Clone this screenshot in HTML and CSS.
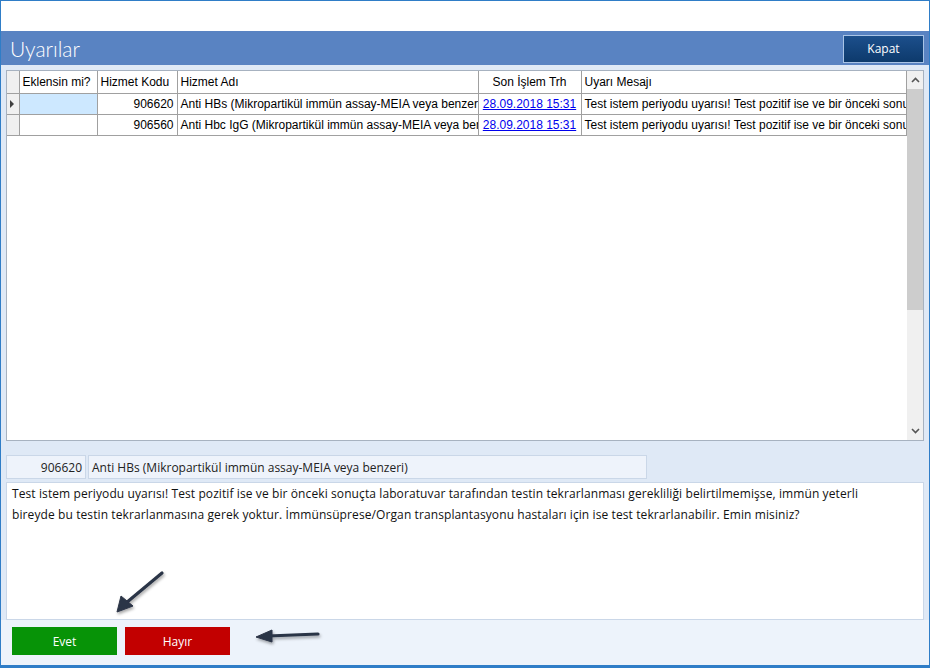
FILE: index.html
```html
<!DOCTYPE html>
<html lang="tr">
<head>
<meta charset="utf-8">
<title>Uyarılar</title>
<link rel="stylesheet" href="styles.css">
</head>
<body>
<div class="window">
  <div class="topstrip"></div>
  <div class="titlebar">
    <span class="title">Uyarılar</span>
    <button class="kapat">Kapat</button>
  </div>
  <div class="content">
    <div class="grid">
      <div class="grid-main">
        <table class="tbl">
          <colgroup>
            <col class="c0"><col class="c1"><col class="c2"><col class="c3"><col class="c4"><col class="c5">
          </colgroup>
          <thead>
            <tr>
              <th class="rh"></th>
              <th>Eklensin mi?</th>
              <th>Hizmet Kodu</th>
              <th>Hizmet Adı</th>
              <th class="center">Son İşlem Trh</th>
              <th>Uyarı Mesajı</th>
            </tr>
          </thead>
          <tbody>
            <tr>
              <td class="rh"><span class="tri"></span></td>
              <td class="sel"></td>
              <td class="num">906620</td>
              <td>Anti HBs (Mikropartikül immün assay-MEIA veya benzeri)</td>
              <td class="center"><a class="lnk">28.09.2018 15:31</a></td>
              <td>Test istem periyodu uyarısı! Test pozitif ise ve bir önceki sonuçta laboratuvar tarafından testin tekrarlanması gerekliliği belirtilmemişse</td>
            </tr>
            <tr>
              <td class="rh"></td>
              <td></td>
              <td class="num">906560</td>
              <td>Anti Hbc IgG (Mikropartikül immün assay-MEIA veya benzeri)</td>
              <td class="center"><a class="lnk">28.09.2018 15:31</a></td>
              <td>Test istem periyodu uyarısı! Test pozitif ise ve bir önceki sonuçta laboratuvar tarafından testin tekrarlanması gerekliliği belirtilmemişse</td>
            </tr>
          </tbody>
        </table>
      </div>
      <div class="vscroll">
        <div class="sbtn"><svg width="9" height="6" viewBox="0 0 9 6"><path d="M1 5 L4.5 1.5 L8 5" fill="none" stroke="#555" stroke-width="1.6"/></svg></div>
        <div class="thumb"></div>
        <div class="track"></div>
        <div class="sbtn"><svg width="9" height="6" viewBox="0 0 9 6"><path d="M1 1 L4.5 4.5 L8 1" fill="none" stroke="#555" stroke-width="1.6"/></svg></div>
      </div>
    </div>
    <div class="fields">
      <div class="field code">906620</div>
      <div class="field name">Anti HBs (Mikropartikül immün assay-MEIA veya benzeri)</div>
    </div>
    <div class="message">Test istem periyodu uyarısı! Test pozitif ise ve bir önceki sonuçta laboratuvar tarafından testin tekrarlanması gerekliliği belirtilmemişse, immün yeterli bireyde bu testin tekrarlanmasına gerek yoktur. İmmünsüprese/Organ transplantasyonu hastaları için ise test tekrarlanabilir. Emin misiniz?</div>
  </div>
  <div class="buttonbar">
    <button class="btn evet">Evet</button>
    <button class="btn hayir">Hayır</button>
  </div>
  <svg class="arrows" width="930" height="668" viewBox="0 0 930 668">
    <defs>
      <filter id="sh" x="-20%" y="-20%" width="140%" height="140%">
        <feDropShadow dx="1" dy="2" stdDeviation="1.5" flood-color="#000" flood-opacity="0.35"/>
      </filter>
    </defs>
    <g filter="url(#sh)" fill="#2b3446" stroke="#2b3446">
      <line x1="162" y1="573" x2="126" y2="603" stroke-width="3.2" stroke-linecap="round"/>
      <polygon points="117,612 121,596 133,606" stroke-width="1"/>
      <line x1="318" y1="634" x2="268" y2="636" stroke-width="3.2" stroke-linecap="round"/>
      <polygon points="256,637 272,630 272,642" stroke-width="1"/>
    </g>
  </svg>
</div>
</body>
</html>
```
FILE: styles.css
```css
* { box-sizing: border-box; }
html, body { margin: 0; padding: 0; }
body {
  width: 930px;
  height: 668px;
  overflow: hidden;
  background: #ffffff;
  font-family: "Liberation Sans", Arial, sans-serif;
}
.window {
  position: relative;
  width: 930px;
  height: 668px;
  border: 1px solid #2f7dc7;
  border-bottom-width: 3px;
  background: #dfe9f6;
  display: flex;
  flex-direction: column;
}
.topstrip {
  height: 30px;
  background: #ffffff;
}
.titlebar {
  height: 34px;
  background: #5983c2;
  display: flex;
  align-items: center;
  justify-content: space-between;
  padding: 0 5px 0 9px;
}
.title {
  font-family: Lato, "Open Sans", sans-serif;
  font-size: 21px;
  font-weight: 300;
  color: #ffffff;
}
.kapat {
  width: 81px;
  height: 28px;
  margin-top: 1px;
  border: 1px solid #a9c4e6;
  background: linear-gradient(#1c4f8c, #0d3a6c);
  color: #ffffff;
  font-family: "Open Sans", "Noto Sans", sans-serif;
  font-size: 12px;
  padding: 0;
}
.content {
  padding: 5px 5px 0 5px;
  display: flex;
  flex-direction: column;
}
.grid {
  height: 371px;
  border: 1px solid #a7b2c0;
  background: #ffffff;
  display: flex;
}
.grid-main {
  flex: 1;
  overflow: hidden;
}
.tbl {
  border-collapse: collapse;
  table-layout: fixed;
  width: 899px;
  font-size: 12px;
  color: #000;
}
.c0 { width: 12px; }
.c1 { width: 78px; }
.c2 { width: 80px; }
.c3 { width: 301px; }
.c4 { width: 103px; }
.c5 { width: 325px; }
.tbl th, .tbl td {
  border: 1px solid #a0a0a0;
  height: 21px;
  padding: 0 3px;
  white-space: nowrap;
  overflow: hidden;
  text-overflow: clip;
  text-align: left;
  font-weight: normal;
}
.tbl thead th {
  height: 22px;
  border-top: none;
  background: #ffffff;
}
.tbl th:first-child, .tbl td:first-child { border-left: none; }
.tbl .center { text-align: center; }
.tbl .num { text-align: right; }
.tbl .rh {
  padding: 0;
  background: #f0f0f0;
}
.tbl td.sel { background: #cde8ff; }
.tri {
  display: block;
  width: 0;
  height: 0;
  margin-left: 3px;
  border-top: 4px solid transparent;
  border-bottom: 4px solid transparent;
  border-left: 4px solid #404040;
}
.lnk {
  color: #0000ee;
  text-decoration: underline;
}
.vscroll {
  width: 16px;
  display: flex;
  flex-direction: column;
  background: #f0f0f0;
}
.sbtn {
  height: 18px;
  display: flex;
  align-items: center;
  justify-content: center;
  background: #f0f0f0;
}
.thumb {
  height: 221px;
  background: #cdcdcd;
}
.track { flex: 1; }
.fields {
  margin-top: 14px;
  display: flex;
  gap: 2px;
  height: 24px;
}
.field {
  background: #eef3fb;
  border: 1px solid #cad7e8;
  font-family: "Open Sans", "Noto Sans", sans-serif;
  font-size: 12px;
  color: #222;
  display: flex;
  align-items: center;
  padding: 0 3px;
  white-space: nowrap;
}
.field.code {
  width: 80px;
  justify-content: flex-end;
}
.field.name { width: 559px; }
.message {
  margin-top: 3px;
  height: 138px;
  background: #ffffff;
  border: 1px solid #cad7e8;
  font-family: "Open Sans", "Noto Sans", sans-serif;
  font-size: 12px;
  letter-spacing: 0.1px;
  line-height: 21px;
  color: #111;
  padding: 0 25px 0 5px;
}
.buttonbar {
  flex: 1;
  background: #edf3fb;
  padding: 7px 11px;
  display: flex;
  gap: 8px;
  align-items: flex-start;
}
.btn {
  width: 105px;
  height: 28px;
  border: none;
  color: #ffffff;
  font-family: "Open Sans", "Noto Sans", sans-serif;
  font-size: 12px;
  padding: 0;
}
.evet { background: #079307; }
.hayir { background: #c20000; }
.arrows {
  position: absolute;
  left: -1px;
  top: -1px;
  pointer-events: none;
}
```
